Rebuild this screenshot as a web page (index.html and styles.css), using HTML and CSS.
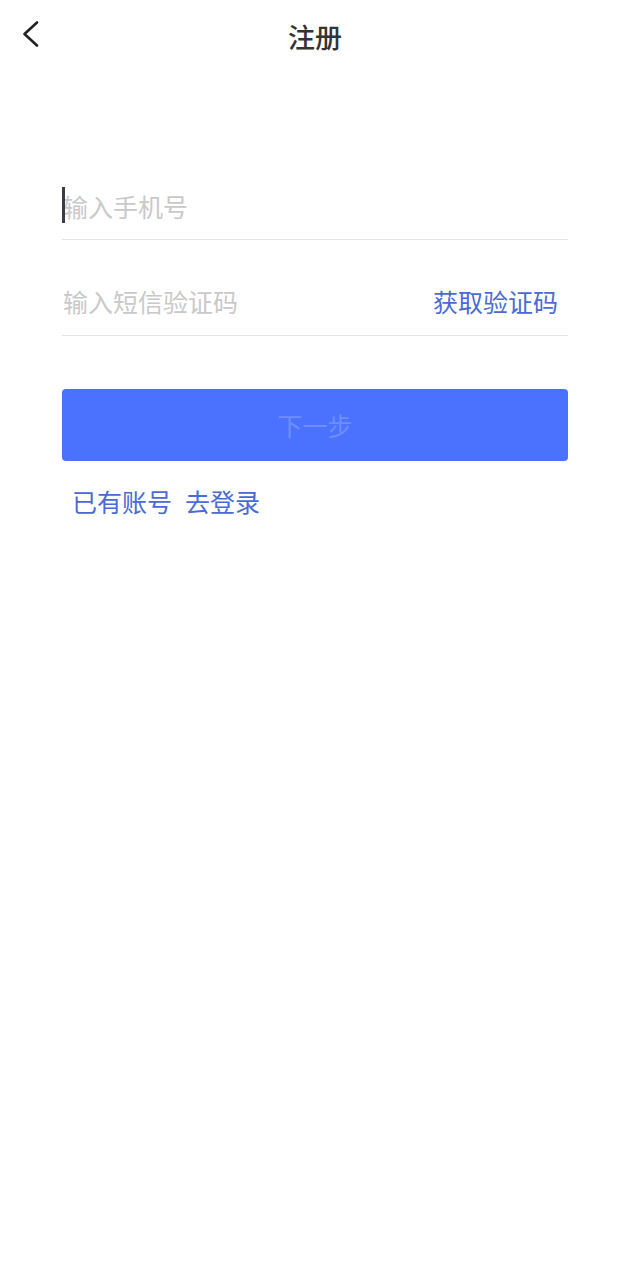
FILE: index.html
```html
<!DOCTYPE html>
<html lang="zh-CN">
<head>
<meta charset="utf-8">
<title>注册</title>
<link rel="stylesheet" href="styles.css">
</head>
<body>
<header class="nav">
  <span class="back">
    <svg width="20" height="30" viewBox="0 0 20 30"><path d="M16 2.5 L3.5 14 L16 25.5" fill="none" stroke="#222" stroke-width="2.6" stroke-linecap="round" stroke-linejoin="round"/></svg>
  </span>
  <h1 class="title">注册</h1>
</header>
<main class="form">
  <div class="field first">
    <span class="caret"></span>
    <span class="placeholder">输入手机号</span>
  </div>
  <div class="field">
    <span class="placeholder">输入短信验证码</span>
    <span class="code">获取验证码</span>
  </div>
  <div class="btn">下一步</div>
  <div class="login"><span>已有账号</span><span class="go">去登录</span></div>
</main>
</body>
</html>
```
FILE: styles.css
```css
html, body {
  margin: 0;
  padding: 0;
  background: #fff;
  font-family: "Noto Sans CJK SC", "Noto Sans", sans-serif;
}
.nav {
  position: relative;
  height: 76px;
  box-sizing: border-box;
  padding-bottom: 4px;
  display: flex;
  align-items: center;
  justify-content: center;
}
.back {
  position: absolute;
  left: 21px;
  top: 20px;
  width: 20px;
  height: 30px;
  display: block;
}
.back svg { display: block; }
.title {
  margin: 0;
  font-size: 27px;
  font-weight: 500;
  color: #333;
  line-height: 1;
}
.form {
  padding: 0 62px;
  display: flex;
  flex-direction: column;
}
.field {
  height: 64px;
  box-sizing: border-box;
  border-bottom: 1px solid #e3e3e3;
  margin-top: 32px;
  display: flex;
  align-items: center;
  padding-bottom: 4px;
  font-size: 25px;
  position: relative;
}
.field.first { margin-top: 100px; padding-bottom: 3px; }
.placeholder {
  color: #c9c9c9;
  padding-left: 1px;
  flex: 1;
  line-height: 1;
}
.caret {
  position: absolute;
  left: 0;
  top: 11px;
  width: 3px;
  height: 36px;
  background: #3a3d45;
}
.code {
  color: #4a6ad4;
  padding-right: 10px;
  line-height: 1;
}
.btn {
  margin-top: 53px;
  height: 72px;
  border-radius: 4px;
  background: #4a72ff;
  color: #6f8dff;
  font-size: 25px;
  display: flex;
  align-items: center;
  justify-content: center;
}
.login {
  margin-top: 25px;
  padding-left: 10px;
  font-size: 25px;
  color: #4a6ad4;
  line-height: 30px;
  display: flex;
}
.go { margin-left: 13px; }
```
